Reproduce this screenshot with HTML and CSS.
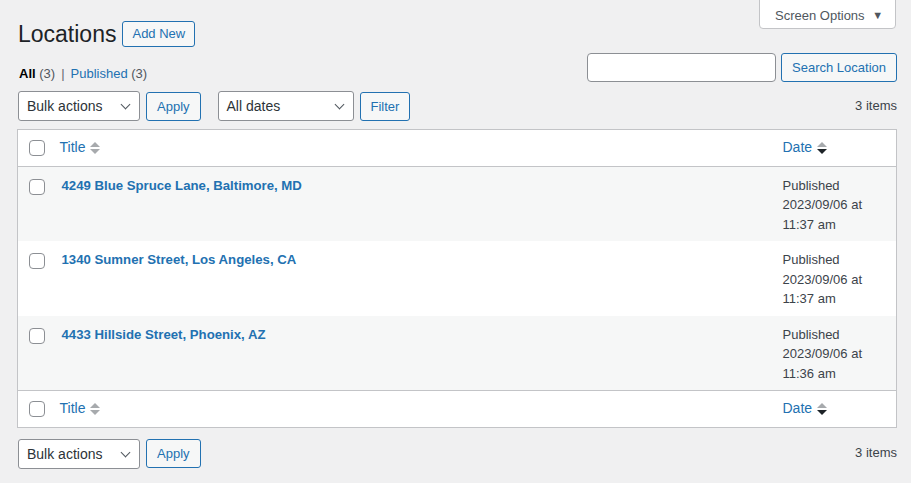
FILE: index.html
```html
<!DOCTYPE html>
<html>
<head>
<meta charset="utf-8">
<link rel="stylesheet" href="styles.css">
</head>
<body>
<div class="page">
  <div class="screen-options">Screen Options <span class="tri">&#9660;</span></div>
  <div class="heading">
    <h1>Locations</h1>
    <a class="add-new">Add New</a>
  </div>
  <div class="filters">
    <ul class="subsubsub">
      <li class="current">All <span class="count">(3)</span></li>
      <li class="sep">|</li>
      <li><a>Published <span class="count">(3)</span></a></li>
    </ul>
    <div class="search-box">
      <input class="search-input" type="text">
      <button class="btn">Search Location</button>
    </div>
  </div>
  <div class="tablenav">
    <div class="actions">
      <div class="select w-bulk">Bulk actions<span class="chev"></span></div>
      <button class="btn">Apply</button>
      <div class="select w-dates">All dates<span class="chev"></span></div>
      <button class="btn">Filter</button>
    </div>
    <div class="items">3 items</div>
  </div>
  <table class="list">
    <thead>
      <tr>
        <th class="cb"><span class="check"></span></th>
        <th class="title"><a class="sort">Title <span class="arrows"><span class="up"></span><span class="down"></span></span></a></th>
        <th class="date"><a class="sort">Date <span class="arrows"><span class="up"></span><span class="down dark"></span></span></a></th>
      </tr>
    </thead>
    <tbody>
      <tr class="alt">
        <td class="cb"><span class="check"></span></td>
        <td class="title"><a class="row-title">4249 Blue Spruce Lane, Baltimore, MD</a></td>
        <td class="date">Published<br>2023/09/06 at<br>11:37 am</td>
      </tr>
      <tr>
        <td class="cb"><span class="check"></span></td>
        <td class="title"><a class="row-title">1340 Sumner Street, Los Angeles, CA</a></td>
        <td class="date">Published<br>2023/09/06 at<br>11:37 am</td>
      </tr>
      <tr class="alt">
        <td class="cb"><span class="check"></span></td>
        <td class="title"><a class="row-title">4433 Hillside Street, Phoenix, AZ</a></td>
        <td class="date">Published<br>2023/09/06 at<br>11:36 am</td>
      </tr>
    </tbody>
    <tfoot>
      <tr>
        <th class="cb"><span class="check"></span></th>
        <th class="title"><a class="sort">Title <span class="arrows"><span class="up"></span><span class="down"></span></span></a></th>
        <th class="date"><a class="sort">Date <span class="arrows"><span class="up"></span><span class="down dark"></span></span></a></th>
      </tr>
    </tfoot>
  </table>
  <div class="tablenav bottom">
    <div class="actions">
      <div class="select w-bulk">Bulk actions<span class="chev"></span></div>
      <button class="btn">Apply</button>
    </div>
    <div class="items">3 items</div>
  </div>
</div>
</body>
</html>
```
FILE: styles.css
```css
* { box-sizing: border-box; }
body {
  margin: 0;
  background: #f0f0f1;
  color: #3c434a;
  font-family: "Liberation Sans", Arial, sans-serif;
  font-size: 13px;
  line-height: 1.4;
}
.page {
  padding: 0 14px 0 18px;
}
.screen-options {
  float: right;
  width: 137px;
  height: 30px;
  margin-top: -1px;
  margin-right: 1px;
  background: #fff;
  border: 1px solid #c3c4c7;
  border-radius: 0 0 4px 4px;
  color: #50575e;
  font-size: 13px;
  line-height: 30px;
  padding-left: 15px;
}
.screen-options .tri {
  font-size: 11px;
  margin-left: 4px;
  color: #50575e;
  vertical-align: 1px;
}
.heading {
  display: flex;
  align-items: center;
  gap: 6px;
  padding-top: 19px;
}
h1 {
  margin: 0;
  font-size: 23px;
  font-weight: 400;
  line-height: 30px;
  color: #1d2327;
}
.add-new {
  display: inline-block;
  border: 1px solid #2271b1;
  border-radius: 3px;
  background: #f6f7f7;
  color: #2271b1;
  padding: 0 9px;
  height: 26px;
  line-height: 24px;
  font-size: 13px;
  font-weight: 500;
}
.filters {
  clear: both;
  display: flex;
  justify-content: space-between;
  align-items: flex-start;
  margin-top: 4px;
  height: 30px;
}
.subsubsub {
  list-style: none;
  margin: 0;
  padding: 12px 0 0 1px;
  display: flex;
  gap: 6px;
  line-height: 18px;
  color: #646970;
}
.subsubsub .current { color: #000; font-weight: 600; }
.subsubsub .current .count { color: #50575e; font-weight: 400; }
.subsubsub a { color: #2271b1; }
.subsubsub .count { color: #50575e; }
.search-box {
  display: flex;
  gap: 5px;
}
.search-input {
  width: 189px;
  height: 29px;
  border: 1px solid #8c8f94;
  border-radius: 4px;
  background: #fff;
  margin: 0;
}
.btn {
  height: 29px;
  border: 1px solid #2271b1;
  border-radius: 3px;
  background: #f6f7f7;
  color: #2271b1;
  font-family: inherit;
  font-size: 13px;
  padding: 0 10px;
  margin: 0;
}
.tablenav {
  display: flex;
  justify-content: space-between;
  align-items: center;
  height: 30px;
  margin-top: 8px;
}
.tablenav.bottom { margin-top: 11px; }
.actions {
  display: flex;
  align-items: center;
  gap: 6px;
}
.actions .w-dates { margin-left: 11px; }
.select {
  position: relative;
  height: 30px;
  border: 1px solid #8c8f94;
  border-radius: 3px;
  background: #fff;
  color: #2c3338;
  font-size: 14px;
  line-height: 28px;
  padding-left: 8px;
}
.w-bulk { width: 122px; }
.w-dates { width: 136px; }
.chev {
  position: absolute;
  right: 10px;
  top: 9px;
  width: 7px;
  height: 7px;
  border-right: 1.5px solid #50575e;
  border-bottom: 1.5px solid #50575e;
  transform: rotate(45deg);
}
.items {
  color: #3c434a;
  font-size: 13px;
}
.list {
  width: 880px;
  margin-left: -1px;
  margin-top: 8px;
  border: 1px solid #c3c4c7;
  border-collapse: collapse;
  background: #fff;
}
.list th, .list td {
  text-align: left;
  vertical-align: top;
  font-weight: 400;
  padding: 8px 10px;
}
.list thead th, .list tfoot th {
  height: 36.5px;
  vertical-align: middle;
  padding-top: 0;
  padding-bottom: 0;
}
.list thead tr { border-bottom: 1px solid #c3c4c7; }
.list tfoot tr { border-top: 1px solid #c3c4c7; }
.list th.cb, .list td.cb {
  width: 42px;
  padding: 0 0 0 11px;
}
.list td.cb { padding-top: 12px; }
.list thead th.cb, .list tfoot th.cb { padding-top: 1px; }
.check {
  display: block;
  width: 16px;
  height: 16px;
  border: 1px solid #8c8f94;
  border-radius: 4px;
  background: #fff;
}
.list th.title { padding-left: 0; }
.list td.title { padding-left: 2px; padding-top: 10px; }
.list th.date, .list td.date {
  width: 125px;
  padding-left: 11px;
}
.list td.date { line-height: 19.5px; padding-top: 9px; padding-bottom: 7px; color: #3c434a; }
.alt { background: #f6f7f7; }
.sort {
  color: #2271b1;
  font-size: 14px;
  display: inline-flex;
  align-items: center;
  gap: 5px;
}
.arrows {
  display: inline-flex;
  flex-direction: column;
  gap: 2px;
}
.arrows span {
  width: 0;
  height: 0;
  border-left: 5px solid transparent;
  border-right: 5px solid transparent;
}
.arrows .up { border-bottom: 5px solid #a7aaad; }
.arrows .down { border-top: 5px solid #a7aaad; }
.arrows .down.dark { border-top-color: #1d2327; }
.row-title {
  color: #2271b1;
  font-size: 13.2px;
  font-weight: 700;
}
```
